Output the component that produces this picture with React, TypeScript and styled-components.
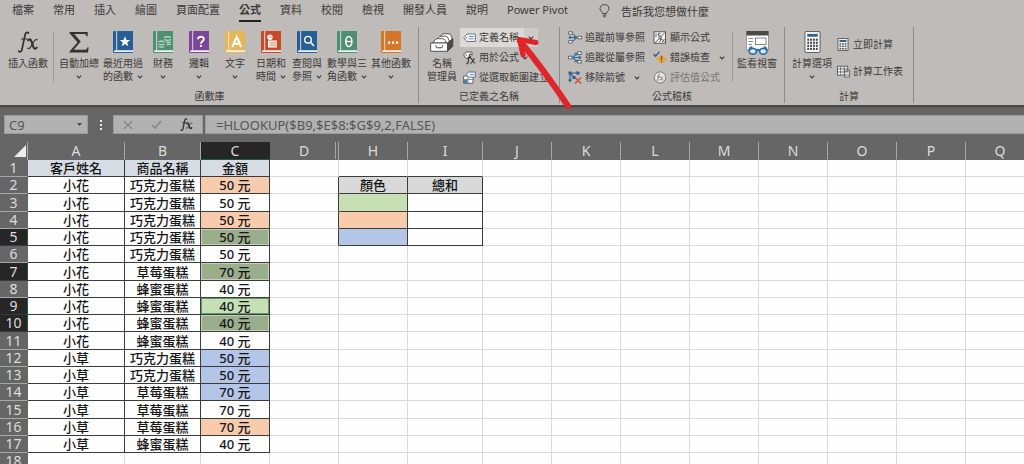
import React from "react";
import styled, { createGlobalStyle, css } from "styled-components";

const GlobalStyle = createGlobalStyle`
  *, *::before, *::after { box-sizing: border-box; }
  html, body { margin: 0; padding: 0; }
  body {
    font-family: "Noto Sans", "Noto Sans CJK TC", sans-serif;
    color: #3b3a39;
    background: #fefefe;
  }
  button, input { font-family: inherit; color: inherit; }
  button { border: 0; background: none; padding: 0; margin: 0; cursor: pointer; }
`;

/* ---------- layout ---------- */

const Window = styled.div`
  display: flex;
  flex-direction: column;
  height: 100vh;
  overflow: hidden;
`;

const RibbonArea = styled.header`
  position: relative;
  flex: none;
  background: #bfbbb8;
  border-bottom: 2px solid #4a4a48;
`;

const TabBar = styled.nav`
  display: flex;
  gap: 19px;
  height: 27px;
  padding: 0 12px;
`;

const Tab = styled.button<{ $active?: boolean }>`
  height: 22px;
  font-size: 11px;
  line-height: 20px;
  white-space: nowrap;
  border-bottom: 2px solid ${(p) => (p.$active ? "#222" : "transparent")};
  font-weight: ${(p) => (p.$active ? 700 : 400)};
`;

const TellMe = styled.label`
  display: flex;
  align-items: center;
  gap: 11px;
  height: 22px;
  margin-left: 12px;
`;

const TellMeInput = styled.input`
  width: 120px;
  height: 20px;
  padding: 0;
  border: 0;
  outline: 0;
  background: transparent;
  font-size: 11px;
  &::placeholder { color: #3b3a39; opacity: 1; }
`;

const Ribbon = styled.div`
  display: flex;
  height: 78px;
  padding: 0 0 2px 1px;
`;

const Group = styled.section`
  display: flex;
  flex-direction: column;
  padding: 1px 5px 0;
  border-right: 1px solid #8e8a87;
`;

const GroupBody = styled.div`
  display: flex;
  flex: 1;
`;

const GroupLabel = styled.h2`
  margin: 0;
  font-size: 10px;
  font-weight: 400;
  line-height: 14px;
  text-align: center;
`;

const Separator = styled.div<{ $gap?: number }>`
  width: 1px;
  height: 50px;
  margin: 4px ${(p) => p.$gap ?? 3}px 0;
  background: #a09c99;
`;

const BigButton = styled.button<{ $narrow?: boolean }>`
  display: flex;
  flex-direction: column;
  align-items: center;
  width: ${(p) => (p.$narrow ? 36 : 44)}px;
  padding-top: 3px;
`;

const BigLabel = styled.span`
  margin-top: 4px;
  font-size: 10px;
  line-height: 13px;
  white-space: nowrap;
  text-align: center;
`;

const LabelLine = styled.span`
  display: flex;
  align-items: center;
  justify-content: center;
  gap: 4px;
  height: 13px;
`;

const SmallColumn = styled.div<{ $spread?: boolean }>`
  display: flex;
  flex-direction: column;
  align-items: flex-start;
  gap: ${(p) => (p.$spread ? 8 : 1)}px;
  padding-top: ${(p) => (p.$spread ? 7 : 0)}px;
`;

const SmallButton = styled.button<{ $hot?: boolean; $dim?: boolean }>`
  display: flex;
  align-items: center;
  gap: 3px;
  height: 19px;
  padding: 0 5px 0 3px;
  font-size: 10px;
  line-height: 19px;
  white-space: nowrap;
  background: ${(p) => (p.$hot ? "#dcd9d7" : "transparent")};
  color: ${(p) => (p.$dim ? "#777472" : "inherit")};
`;

const SplitButton = styled.div`
  display: flex;
`;

const SplitArrow = styled.button`
  display: flex;
  align-items: center;
  justify-content: center;
  width: 14px;
  height: 19px;
  background: #cdcac7;
`;

const ChevronSpace = styled.span<{ $far?: boolean }>`
  display: flex;
  margin-left: ${(p) => (p.$far ? 6 : 0)}px;
`;

const PointerArrow = styled.svg`
  position: absolute;
  left: 512px;
  top: 32px;
  pointer-events: none;
`;

/* ---------- formula bar ---------- */

const FormulaBar = styled.div`
  display: flex;
  flex: none;
  gap: 2px;
  height: 35px;
  padding: 7px 0 8px 4px;
  background: #666;
  border-top: 1px solid #5b5b5b;
`;

const NameBox = styled.div`
  display: flex;
  align-items: center;
  width: 84px;
  padding: 0 5px 0 4px;
  background: #b1b1b1;
  border: 1px solid #9a9a9a;
`;

const BarInput = styled.input`
  flex: 1;
  min-width: 0;
  width: 100%;
  height: 18px;
  padding: 0;
  border: 0;
  outline: 0;
  background: transparent;
  color: #555;
  font-size: 13px;
  line-height: 18px;
`;

const Grip = styled.div`
  display: flex;
  align-items: center;
  justify-content: center;
  width: 21px;
`;

const BarButtons = styled.div`
  display: flex;
  align-items: center;
  justify-content: space-around;
  width: 90px;
  background: #b1b1b1;
  border: 1px solid #9a9a9a;
`;

const BarButton = styled.button`
  display: flex;
`;

const FormulaBox = styled.div`
  display: flex;
  flex: 1;
  align-items: center;
  padding-left: 10px;
  background: #b1b1b1;
  border: 1px solid #9a9a9a;
  border-right: 0;
`;

/* ---------- sheet ---------- */

const SheetArea = styled.main`
  flex: 1;
  min-height: 0;
  overflow: hidden;
  background: #fefefe;
`;

const Sheet = styled.table`
  width: 100%;
  min-width: 1035px;
  table-layout: fixed;
  border-collapse: separate;
  border-spacing: 0;
`;

const Col = styled.col<{ $w?: number }>`
  width: ${(p) => (p.$w ? `${p.$w}px` : "auto")};
`;

const ColHead = styled.th<{ $on?: boolean }>`
  height: 18px;
  padding: 0;
  background: ${(p) => (p.$on ? "#262626" : "#666")};
  color: #dcdcdc;
  font-size: 14px;
  font-weight: 400;
  line-height: 16px;
  border-right: 1px solid ${(p) => (p.$on ? "#262626" : "#a8a8a8")};
  border-bottom: 1px solid ${(p) => (p.$on ? "#1e5b3a" : "#666")};
`;

const FoldedHead = styled(ColHead)`
  box-shadow: inset -2px 0 #666, inset -3px 0 #a8a8a8;
`;

const Corner = styled.td`
  padding: 0;
  background: #666;
  border-right: 1px solid #a8a8a8;
`;

const CornerMark = styled.svg`
  display: block;
  margin-left: 14px;
`;

const Row = styled.tr`
  height: 17px;
  &:nth-child(4n + 3) { height: 18px; }
`;

const RowHead = styled.th<{ $on?: boolean }>`
  padding: 0;
  background: ${(p) => (p.$on ? "#262626" : "#666")};
  color: #dcdcdc;
  font-size: 14px;
  font-weight: 400;
  line-height: 16px;
  border-right: 1px solid ${(p) => (p.$on ? "#1e5b3a" : "#666")};
  border-bottom: 1px solid ${(p) => (p.$on ? "#3a3a3a" : "#a8a8a8")};
`;

const LINE = "#3c3c3c";
const GRID = "#dadada";

const Cell = styled.td<{ $fill?: string; $right?: boolean; $bottom?: boolean; $mark?: "picked" | "active" }>`
  padding: 0;
  overflow: hidden;
  color: #161616;
  font-size: 13px;
  font-weight: 500;
  line-height: 16px;
  text-align: center;
  white-space: nowrap;
  background: ${(p) => p.$fill ?? "transparent"};
  border-right: 1px solid ${(p) => (p.$right ? LINE : GRID)};
  border-bottom: 1px solid ${(p) => (p.$bottom ? LINE : GRID)};
  ${(p) => p.$mark === "picked" && css`box-shadow: inset 0 0 0 1px #c3d0ba;`}
  ${(p) => p.$mark === "active" && css`box-shadow: inset 0 0 0 1px #5f9a6c;`}
`;

/* ---------- icons ---------- */

const Chevron = () => (
  <svg width="6" height="4" viewBox="0 0 6 4" fill="none" stroke="#3b3a39" strokeWidth="1.1" aria-hidden="true">
    <path d="M0.8 0.7 3 2.9 5.2 0.7" />
  </svg>
);

const Book = ({ color, children }: { color: string; children: React.ReactNode }) => (
  <svg width="20" height="22" viewBox="0 0 20 22" aria-hidden="true">
    <path d="M1 0H20V22H1Q0 22 0 20.500V1Q0 0 1 0Z" fill={color} />
    <path d="M3.700 0V19" stroke="#e9e6e4" strokeWidth="0.9" />
    <path d="M20 19.300H2Q1 19.300 1 20.200T2 21.100H20Z" fill="#f3f1ef" />
    {children}
  </svg>
);

const bookColors = {
  blue: "#265f98",
  green: "#4f9075",
  purple: "#7b459c",
  yellow: "#e6b757",
  red: "#c84a2b",
  orange: "#d37629",
};

const StarBook = () => (
  <Book color={bookColors.blue}>
    <path d="M12 5.300 13.400 8.900 17.200 9.100 14.200 11.500 15.200 15.200 12 13.100 8.800 15.200 9.800 11.500 6.800 9.100 10.600 8.900Z" fill="#fff" />
  </Book>
);

const CoinsBook = () => (
  <Book color={bookColors.green}>
    <g fill="none" stroke="#bcd5c8" strokeWidth="1.300">
      <path d="M11 6.500Q14.500 5 18 6.500M11 8.700Q14.500 10 18 8.700M13 11Q15.500 12 18 11M13.500 13.300Q16 14 18 13" />
      <path d="M5.500 11Q8.500 9.500 11.500 11M5.500 13Q8.500 14.500 11.500 13M5.500 15.500Q8.500 17 11.500 15.500" />
    </g>
  </Book>
);

const QuestionBook = () => (
  <Book color={bookColors.purple}>
    <path d="M9 8.300C9 4.800 14.800 4.900 14.800 8.100 14.800 10.300 11.900 10.300 11.900 12.800" fill="none" stroke="#fff" strokeWidth="1.900" />
    <rect x="10.900" y="14" width="2" height="2" fill="#fff" />
  </Book>
);

const LetterBook = () => (
  <Book color={bookColors.yellow}>
    <path d="M7.200 16 11.700 5.800 16.200 16M8.800 12.700H14.600" fill="none" stroke="#fff" strokeWidth="2" />
  </Book>
);

const DateBook = () => (
  <Book color={bookColors.red}>
    <path d="M7 9.500H16V16.500H7Z" fill="#fff" />
    <path d="M8.500 11.200H16M8.500 13H16M8.500 14.800H16" stroke={bookColors.red} strokeWidth="0.600" />
    <circle cx="9" cy="6.200" r="2.700" fill="#fff" />
    <path d="M9 4.700V6.400H10.400" fill="none" stroke={bookColors.red} strokeWidth="0.700" />
  </Book>
);

const SearchBook = () => (
  <Book color={bookColors.blue}>
    <circle cx="11" cy="8.700" r="3.300" fill="none" stroke="#fff" strokeWidth="1.400" />
    <path d="M13.300 11 17 15" stroke="#fff" strokeWidth="1.800" />
  </Book>
);

const ThetaBook = () => (
  <Book color={bookColors.green}>
    <ellipse cx="11.800" cy="10.500" rx="3" ry="5" fill="none" stroke="#fff" strokeWidth="1.600" />
    <path d="M9 10.500H14.600" stroke="#fff" strokeWidth="1.300" />
  </Book>
);

const DotsBook = () => (
  <Book color={bookColors.orange}>
    <g fill="#fff">
      <rect x="7" y="10.500" width="2.200" height="2.200" />
      <rect x="11" y="10.500" width="2.200" height="2.200" />
      <rect x="15" y="10.500" width="2.200" height="2.200" />
    </g>
  </Book>
);

const FxShape = ({ size, color = "#333", weight = 1.7 }: { size: number; color?: string; weight?: number }) => (
  <svg width={size} height={size} viewBox="0 0 22 22" fill="none" stroke={color} strokeLinecap="round" aria-hidden="true">
    <path d="M11.500 2.200C10.600 0.700 8.600 1.200 8 4L5 18.200C4.400 20.900 2.800 21.600 1.700 20.200" strokeWidth={weight} />
    <path d="M4.400 8H10.200" strokeWidth={weight * 0.7} />
    <path d="M11.200 9.300C12.800 7.700 13.700 8.300 14.500 10.400L16.400 16C17.100 18 18.300 18.300 19.800 16.600" strokeWidth={weight * 1.2} />
    <path d="M20.200 8.800C18.700 7.900 17.500 9.200 15.500 12.800 13.700 16.300 12.500 18.300 10.800 17.200" strokeWidth={weight * 0.7} />
  </svg>
);

const Sigma = () => (
  <svg width="20" height="22" viewBox="0 0 20 22" aria-hidden="true">
    <path d="M0.500 1H18.700V5.300H17.600Q17.300 3 15 3H5.200L11.700 10.400 4.700 18.800H15.600Q18.200 18.800 18.600 16.200H19.600L19 21.500H0.500V20.400L8.500 11.200 0.500 2.200Z" fill="#333" />
  </svg>
);

const NameManager = () => (
  <svg width="24" height="22" viewBox="0 0 24 22" strokeLinejoin="round" aria-hidden="true">
    <g fill="#fff" stroke="#444" strokeWidth="0.900">
      <path d="M9 8 11.500 4Q12.500 2.800 14 2.800H18.500Q20.500 2.800 21 4.500L22.500 8.500 17.500 12H9Z" />
      <path d="M6 10 8.500 6.500Q9.500 5.200 11 5.200H15.500Q17.500 5.200 18 7L19.500 10.500 17.500 12H6Z" />
      <path d="M2.500 12 5 9Q6 7.700 7.500 7.700H12.500Q14.500 7.700 15 9.300L16.500 12Z" />
      <path d="M17.500 12 22.800 7.500V15.300L17.500 20.300Z" fill="#4c4c4c" />
      <rect x="0.700" y="12" width="16.800" height="8.300" />
    </g>
    <path d="M6 14.300V15.200Q6 16.800 7.500 16.800H11Q12.500 16.800 12.500 15.200V14.300" fill="none" stroke="#444" strokeWidth="1" />
  </svg>
);

const DefineName = () => (
  <svg width="13" height="12" viewBox="0 0 13 12" aria-hidden="true">
    <path d="M4 2H12.300V9.500H4L0.700 5.750Z" fill="#fff" stroke="#4c6a86" strokeWidth="0.900" />
    <circle cx="3.300" cy="5.750" r="0.700" fill="#4c6a86" />
    <path d="M5.500 4.500H10.800M5.500 6.800H10.800" stroke="#4c6a86" strokeWidth="0.800" />
  </svg>
);

const UseInFormula = () => (
  <svg width="13" height="14" viewBox="0 0 13 14" fill="none" stroke="#3b3a39" aria-hidden="true">
    <path d="M0.600 4 3 1H9V4.500L5 7.500H3Z" fill="#f5f4f3" stroke="#555" strokeWidth="0.900" />
    <circle cx="3.200" cy="4" r="0.700" fill="#555" stroke="none" />
    <path d="M8.300 3.500C7.500 2.700 6.800 3.200 6.500 4.500L5 11.500C4.700 12.800 4 13 3.300 12.500M4.500 6.500H8" strokeWidth="1.200" />
    <path d="M7.500 7.500C9.500 6.500 9.700 12.500 12.300 12M12 7.500C10.200 7.500 9.500 12.500 7.200 12.500" strokeWidth="1.200" />
  </svg>
);

const FromSelection = () => (
  <svg width="13" height="13" viewBox="0 0 13 13" aria-hidden="true">
    <path d="M0.600 5H10V12.300H0.600Z" fill="#fff" stroke="#555" strokeWidth="0.900" />
    <path d="M0.600 8.500H10M5 5V12" stroke="#777" strokeWidth="0.800" />
    <path d="M1 9H4.600V12H1Z" fill="#4a84b5" />
    <path d="M5.500 1H12.300V6.200H5.500L3.300 3.600Z" fill="#f3f6f9" stroke="#4c6a86" strokeWidth="0.900" />
    <path d="M7 3.600H11" stroke="#4c6a86" strokeWidth="0.800" />
  </svg>
);

const TracePrecedents = () => (
  <svg width="14" height="13" viewBox="0 0 14 13" aria-hidden="true">
    <g fill="#fff" stroke="#4b4b4b" strokeWidth="0.800">
      <rect x="0.800" y="0.800" width="3.400" height="2.400" />
      <rect x="0.800" y="9.600" width="3.400" height="2.400" />
      <rect x="9.900" y="5.200" width="3.600" height="2.600" />
    </g>
    <g fill="#2f6ea3" stroke="#2f6ea3" strokeWidth="1">
      <path d="M4.500 2.500 7 4.500M4.500 10.300 7 8.500M1 6.500H7" fill="none" />
      <path d="M6.500 4.500 9.300 6.500 6.500 8.500Z" />
      <circle cx="2" cy="6.500" r="0.900" />
    </g>
  </svg>
);

const TraceDependents = () => (
  <svg width="14" height="13" viewBox="0 0 14 13" aria-hidden="true">
    <g fill="#fff" stroke="#4b4b4b" strokeWidth="0.800">
      <rect x="0.600" y="5.200" width="3.400" height="2.600" />
      <rect x="9.800" y="0.800" width="3.400" height="2.600" />
      <rect x="9.800" y="9.400" width="3.400" height="2.600" />
    </g>
    <g fill="none" stroke="#2f6ea3" strokeWidth="1.100">
      <path d="M4.500 6.500H12.500M5 6 8.800 2.500M5 7 8.800 10.500" />
      <path d="M6.500 2.200H9V4.500M6.500 10.800H9V8.500M11 5 12.700 6.500 11 8" />
    </g>
  </svg>
);

const RemoveArrows = () => (
  <svg width="14" height="13" viewBox="0 0 14 13" aria-hidden="true">
    <g fill="none" stroke="#2f5f8e" strokeWidth="1.200">
      <path d="M2 2H10M2 2V10M2.500 2.500 6.500 7M8.500 0.500 10.500 2 8.500 3.500M0.500 8.500 2 10.500 3.500 8.500" />
    </g>
    <g fill="#2f5f8e">
      <rect x="0.500" y="0.500" width="3" height="3" />
      <rect x="4.500" y="5" width="3" height="3" />
      <rect x="9" y="0.800" width="2.600" height="2.600" />
    </g>
    <path d="M7 6.500 13 12.500M13 6.500 7 12.500" stroke="#d0452f" strokeWidth="1.300" />
  </svg>
);

const ShowFormulas = () => (
  <svg width="14" height="13" viewBox="0 0 14 13" fill="none" stroke="#4b4b4b" aria-hidden="true">
    <rect x="1" y="0.800" width="11.500" height="11.400" fill="#f7f6f5" strokeWidth="0.900" />
    <path d="M12 1.500 2 11.800" strokeWidth="0.900" />
    <path d="M3 2.500V6M7.500 2.600H5.200V4.200Q7.500 4 7.300 5.200T5 6" strokeWidth="0.900" />
    <path d="M9 6.500Q8 6 7.700 8L7 11M6.700 8.200H9M9.300 8.200 11.500 11M11.500 8.200 9 11" strokeWidth="0.900" />
  </svg>
);

const ErrorCheck = () => (
  <svg width="14" height="13" viewBox="0 0 14 13" aria-hidden="true">
    <path d="M8.500 3.500 13.300 8 8.500 12.600 3.800 8Z" fill="#e9a23b" stroke="#e9a23b" strokeWidth="0.800" strokeLinejoin="round" />
    <path d="M8.500 5V9M8.500 10V11.300" stroke="#7a5212" strokeWidth="1.200" />
    <path d="M0.500 3 2.500 5.200 6.500 0.600" fill="none" stroke="#2b5f92" strokeWidth="1.400" />
  </svg>
);

const Evaluate = () => (
  <svg width="14" height="13" viewBox="0 0 14 13" fill="none" stroke="#777472" aria-hidden="true">
    <circle cx="7" cy="6.500" r="5.600" fill="#e8e6e4" strokeWidth="0.900" />
    <path d="M7 3.200Q5.800 2.600 5.500 4.500L4.900 9Q4.600 10.400 3.700 9.900M4.300 5.600H7M7 6Q8.200 5.500 8.500 7.500T10.300 9M10.200 6Q9 5.800 8.500 7.500T6.800 9" strokeWidth="0.900" />
  </svg>
);

const WatchWindow = () => (
  <svg width="23" height="22" viewBox="0 0 23 22" overflow="visible" aria-hidden="true">
    <rect x="0.500" y="0.500" width="22" height="18.500" fill="#fff" stroke="#8a8785" strokeWidth="0.800" />
    <rect x="0.500" y="0" width="22" height="4.500" fill="#4a4a4a" />
    <path d="M2.500 7.500H7M2.500 10.500H7M2.500 13.500H6" stroke="#777" strokeWidth="0.900" />
    <rect x="9.500" y="7" width="10.500" height="6.500" fill="#fff" stroke="#777" strokeWidth="0.900" />
    <g fill="#d9e8f4" stroke="#2f6ea3" strokeWidth="1.700">
      <ellipse cx="6.800" cy="20.200" rx="3.600" ry="2.900" />
      <ellipse cx="17.200" cy="20.200" rx="3.600" ry="2.900" />
      <path d="M10.300 19.500Q12 18 13.700 19.500M3.300 19Q3.300 16 6.300 16M20.700 19Q20.700 16 17.700 16" fill="none" />
    </g>
  </svg>
);

const Calculator = () => (
  <svg width="17" height="22" viewBox="0 0 17 23" aria-hidden="true">
    <rect x="0.600" y="0.600" width="15.800" height="21.800" rx="1" fill="#fdfdfd" stroke="#555" strokeWidth="1" />
    <rect x="3" y="3" width="11" height="3" fill="#2f6590" />
    <g fill="#444">
      {[8, 11.2, 14.4, 17.6].map((y) =>
        [3, 6, 9, 12].map((x) => <rect key={`${x}-${y}`} x={x} y={y} width="2" height="2.200" />)
      )}
    </g>
  </svg>
);

const SmallCalculator = () => (
  <svg width="13" height="13" viewBox="0 0 13 13" aria-hidden="true">
    <rect x="1" y="0.600" width="10" height="11.800" fill="#f6f6f6" stroke="#555" strokeWidth="0.900" />
    <rect x="2.500" y="2" width="7" height="2" fill="#2f6590" />
    <g fill="#555">
      {[5.2, 7.6, 10].map((y) =>
        [2.5, 5.1, 7.7].map((x) => <rect key={`${x}-${y}`} x={x} y={y} width="1.700" height="1.500" />)
      )}
    </g>
  </svg>
);

const CalcSheet = () => (
  <svg width="13" height="13" viewBox="0 0 14 13" aria-hidden="true">
    <rect x="0.600" y="0.800" width="11" height="9.500" fill="#fff" stroke="#4b4b4b" strokeWidth="0.900" />
    <path d="M0.600 3.700H11.600M0.600 7H11.600M4 1V10M7.800 1V10" stroke="#4b4b4b" strokeWidth="0.800" />
    <rect x="8" y="5" width="5.400" height="7.500" fill="#f4f4f4" stroke="#4b4b4b" strokeWidth="0.800" />
    <path d="M9 6.800H12.400" stroke="#2f6590" strokeWidth="1.300" />
    <path d="M9.300 9V11.500M10.800 9V11.500M12.200 9V11.500" stroke="#666" strokeWidth="0.700" />
  </svg>
);

const Bulb = () => (
  <svg width="11" height="14" viewBox="0 0 11 14" fill="none" stroke="#3b3a39" strokeWidth="0.900" aria-hidden="true">
    <path d="M3.600 9.500C3.600 7.700 1 7 1 4.600 1 2.200 3 0.600 5.500 0.600S10 2.200 10 4.600C10 7 7.400 7.700 7.400 9.500Z" />
    <path d="M3.700 11.200H7.300M4.200 12.800H6.800" />
  </svg>
);

/* ---------- ribbon pieces ---------- */

interface BigProps {
  icon: React.ReactNode;
  first: string;
  second?: string;
  arrow?: boolean;
  narrow?: boolean;
}

const Big = ({ icon, first, second, arrow, narrow }: BigProps) => (
  <BigButton $narrow={narrow}>
    {icon}
    <BigLabel>
      <LabelLine>{first}</LabelLine>
      {(second || arrow) && (
        <LabelLine>
          {second}
          {arrow && <Chevron />}
        </LabelLine>
      )}
    </BigLabel>
  </BigButton>
);

interface SmallProps {
  icon: React.ReactNode;
  text: string;
  arrow?: "near" | "far";
  dim?: boolean;
  hot?: boolean;
}

const Small = ({ icon, text, arrow, dim, hot }: SmallProps) => (
  <SmallButton $dim={dim} $hot={hot}>
    {icon}
    <span>{text}</span>
    {arrow && (
      <ChevronSpace $far={arrow === "far"}>
        <Chevron />
      </ChevronSpace>
    )}
  </SmallButton>
);

/* ---------- data ---------- */

const tabs = ["檔案", "常用", "插入", "繪圖", "頁面配置", "公式", "資料", "校閱", "檢視", "開發人員", "說明", "Power Pivot"];

const functionBooks: BigProps[] = [
  { icon: <StarBook />, first: "最近用過", second: "的函數", arrow: true },
  { icon: <CoinsBook />, first: "財務", arrow: true, narrow: true },
  { icon: <QuestionBook />, first: "邏輯", arrow: true, narrow: true },
  { icon: <LetterBook />, first: "文字", arrow: true, narrow: true },
  { icon: <DateBook />, first: "日期和", second: "時間", arrow: true, narrow: true },
  { icon: <SearchBook />, first: "查閱與", second: "參照", arrow: true, narrow: true },
  { icon: <ThetaBook />, first: "數學與三", second: "角函數", arrow: true },
  { icon: <DotsBook />, first: "其他函數", arrow: true },
];

const columns: { name: string; width?: number }[] = [
  { name: "A", width: 97 },
  { name: "B", width: 76 },
  { name: "C", width: 69 },
  { name: "D", width: 69 },
  { name: "H", width: 69 },
  { name: "I", width: 75 },
  ...["J", "K", "L", "M", "N", "O", "P"].map((name) => ({ name, width: 69 })),
  { name: "Q" },
];

const ORANGE = "#f8cbad";
const GREEN = "#c6e0b4";
const BLUE = "#b4c6e7";
const PICKED = "#9aae8b";

const orders: [string, string, string, string?][] = [
  ["客戶姓名", "商品名稱", "金額", "#d6dce4"],
  ["小花", "巧克力蛋糕", "50 元", ORANGE],
  ["小花", "巧克力蛋糕", "50 元"],
  ["小花", "巧克力蛋糕", "50 元", ORANGE],
  ["小花", "巧克力蛋糕", "50 元", PICKED],
  ["小花", "巧克力蛋糕", "50 元"],
  ["小花", "草莓蛋糕", "70 元", PICKED],
  ["小花", "蜂蜜蛋糕", "40 元"],
  ["小花", "蜂蜜蛋糕", "40 元", GREEN],
  ["小花", "蜂蜜蛋糕", "40 元", PICKED],
  ["小花", "蜂蜜蛋糕", "40 元"],
  ["小草", "巧克力蛋糕", "50 元", BLUE],
  ["小草", "巧克力蛋糕", "50 元", BLUE],
  ["小草", "草莓蛋糕", "70 元", BLUE],
  ["小草", "草莓蛋糕", "70 元"],
  ["小草", "草莓蛋糕", "70 元", ORANGE],
  ["小草", "蜂蜜蛋糕", "40 元"],
];

const summary: Record<number, { h: string; i: string; hFill: string; iFill?: string }> = {
  2: { h: "顏色", i: "總和", hFill: "#d9d9d9", iFill: "#d9d9d9" },
  3: { h: "", i: "", hFill: GREEN },
  4: { h: "", i: "", hFill: ORANGE },
  5: { h: "", i: "", hFill: BLUE },
};

const selectedRows = [5, 7, 9, 10];
const rowNumbers = Array.from({ length: 18 }, (_, i) => i + 1);

const SheetRow = ({ n }: { n: number }) => {
  const order = orders[n - 1];
  const sum = summary[n];
  const headFill = n === 1 ? order[3] : undefined;
  const framed = Boolean(order);
  const lineBelow = n <= 5;
  const mark = n === 9 ? "active" : selectedRows.includes(n) ? "picked" : undefined;
  return (
    <Row>
      <RowHead scope="row" $on={selectedRows.includes(n)}>{n}</RowHead>
      <Cell $right={framed} $bottom={framed} $fill={headFill}>{order?.[0]}</Cell>
      <Cell $right={framed} $bottom={framed} $fill={headFill}>{order?.[1]}</Cell>
      <Cell $right={framed} $bottom={framed} $fill={order?.[3]} $mark={mark}>{order?.[2]}</Cell>
      <Cell $right={Boolean(sum)} />
      <Cell $right={Boolean(sum)} $bottom={lineBelow} $fill={sum?.hFill}>{sum?.h}</Cell>
      <Cell $right={Boolean(sum)} $bottom={lineBelow} $fill={sum?.iFill}>{sum?.i}</Cell>
      {columns.slice(6).map((c) => (
        <Cell key={c.name} />
      ))}
    </Row>
  );
};

export default function App() {
  return (
    <Window>
      <GlobalStyle />
      <RibbonArea>
        <TabBar>
          {tabs.map((t) => (
            <Tab key={t} $active={t === "公式"}>{t}</Tab>
          ))}
          <TellMe>
            <Bulb />
            <TellMeInput aria-label="告訴我您想做什麼" placeholder="告訴我您想做什麼" />
          </TellMe>
        </TabBar>

        <Ribbon>
          <Group>
            <GroupBody>
              <Big icon={<FxShape size={22} />} first="插入函數" />
              <Separator $gap={3} />
              <Big icon={<Sigma />} first="自動加總" arrow />
              {functionBooks.map((b) => (
                <Big key={b.first} {...b} />
              ))}
            </GroupBody>
            <GroupLabel>函數庫</GroupLabel>
          </Group>

          <Group>
            <GroupBody>
              <Big icon={<NameManager />} first="名稱" second="管理員" narrow />
              <SmallColumn>
                <SplitButton>
                  <Small icon={<DefineName />} text="定義名稱" hot />
                  <SplitArrow aria-label="定義名稱選項"><Chevron /></SplitArrow>
                </SplitButton>
                <Small icon={<UseInFormula />} text="用於公式" arrow="near" />
                <Small icon={<FromSelection />} text="從選取範圍建立" />
              </SmallColumn>
            </GroupBody>
            <GroupLabel>已定義之名稱</GroupLabel>
          </Group>

          <Group>
            <GroupBody>
              <SmallColumn>
                <Small icon={<TracePrecedents />} text="追蹤前導參照" />
                <Small icon={<TraceDependents />} text="追蹤從屬參照" />
                <Small icon={<RemoveArrows />} text="移除箭號" arrow="far" />
              </SmallColumn>
              <SmallColumn>
                <Small icon={<ShowFormulas />} text="顯示公式" />
                <Small icon={<ErrorCheck />} text="錯誤檢查" arrow="far" />
                <Small icon={<Evaluate />} text="評估值公式" dim />
              </SmallColumn>
              <Separator $gap={2} />
              <Big icon={<WatchWindow />} first="監看視窗" />
            </GroupBody>
            <GroupLabel>公式稽核</GroupLabel>
          </Group>

          <Group>
            <GroupBody>
              <Big icon={<Calculator />} first="計算選項" arrow />
              <SmallColumn $spread>
                <Small icon={<SmallCalculator />} text="立即計算" />
                <Small icon={<CalcSheet />} text="計算工作表" />
              </SmallColumn>
            </GroupBody>
            <GroupLabel>計算</GroupLabel>
          </Group>
        </Ribbon>

        <PointerArrow width="62" height="80" viewBox="0 0 62 80" fill="none" stroke="#e0242a" strokeLinecap="round" strokeLinejoin="round" aria-hidden="true">
          <path d="M56 74C46 59 28 33 8 9" strokeWidth="6" />
          <path d="M24 10.500 7.500 7.500 11 23" strokeWidth="5" />
        </PointerArrow>
      </RibbonArea>

      <FormulaBar>
        <NameBox>
          <BarInput aria-label="名稱方塊" defaultValue="C9" />
          <svg width="5" height="3" viewBox="0 0 5 3" aria-hidden="true"><path d="M0 0H5L2.500 3Z" fill="#4a4a4a" /></svg>
        </NameBox>
        <Grip>
          <svg width="2" height="10" viewBox="0 0 2 10" fill="#e8e8e8" aria-hidden="true">
            <path d="M0 0H2V2H0ZM0 4H2V6H0ZM0 8H2V10H0Z" />
          </svg>
        </Grip>
        <BarButtons>
          <BarButton aria-label="取消">
            <svg width="10" height="10" viewBox="0 0 10 10" stroke="#858585" strokeWidth="1.400" aria-hidden="true"><path d="M1 1 9 9M9 1 1 9" /></svg>
          </BarButton>
          <BarButton aria-label="輸入">
            <svg width="11" height="9" viewBox="0 0 11 9" fill="none" stroke="#858585" strokeWidth="1.700" aria-hidden="true"><path d="M1 5 4 8 10 1" /></svg>
          </BarButton>
          <BarButton aria-label="插入函數"><FxShape size={13} weight={2.2} /></BarButton>
        </BarButtons>
        <FormulaBox>
          <BarInput aria-label="資料編輯列" defaultValue="=HLOOKUP($B9,$E$8:$G$9,2,FALSE)" />
        </FormulaBox>
      </FormulaBar>

      <SheetArea>
        <Sheet>
          <colgroup>
            <Col $w={28} />
            {columns.map((c) => (
              <Col key={c.name} $w={c.width} />
            ))}
          </colgroup>
          <thead>
            <tr>
              <Corner>
                <CornerMark width="12" height="12" viewBox="0 0 12 12" aria-hidden="true">
                  <path d="M12 0V12H0Z" fill="#ececec" />
                </CornerMark>
              </Corner>
              {columns.map((c) =>
                c.name === "D" ? (
                  <FoldedHead key={c.name} scope="col">{c.name}</FoldedHead>
                ) : (
                  <ColHead key={c.name} scope="col" $on={c.name === "C"}>{c.name}</ColHead>
                )
              )}
            </tr>
          </thead>
          <tbody>
            {rowNumbers.map((n) => (
              <SheetRow key={n} n={n} />
            ))}
          </tbody>
        </Sheet>
      </SheetArea>
    </Window>
  );
}
